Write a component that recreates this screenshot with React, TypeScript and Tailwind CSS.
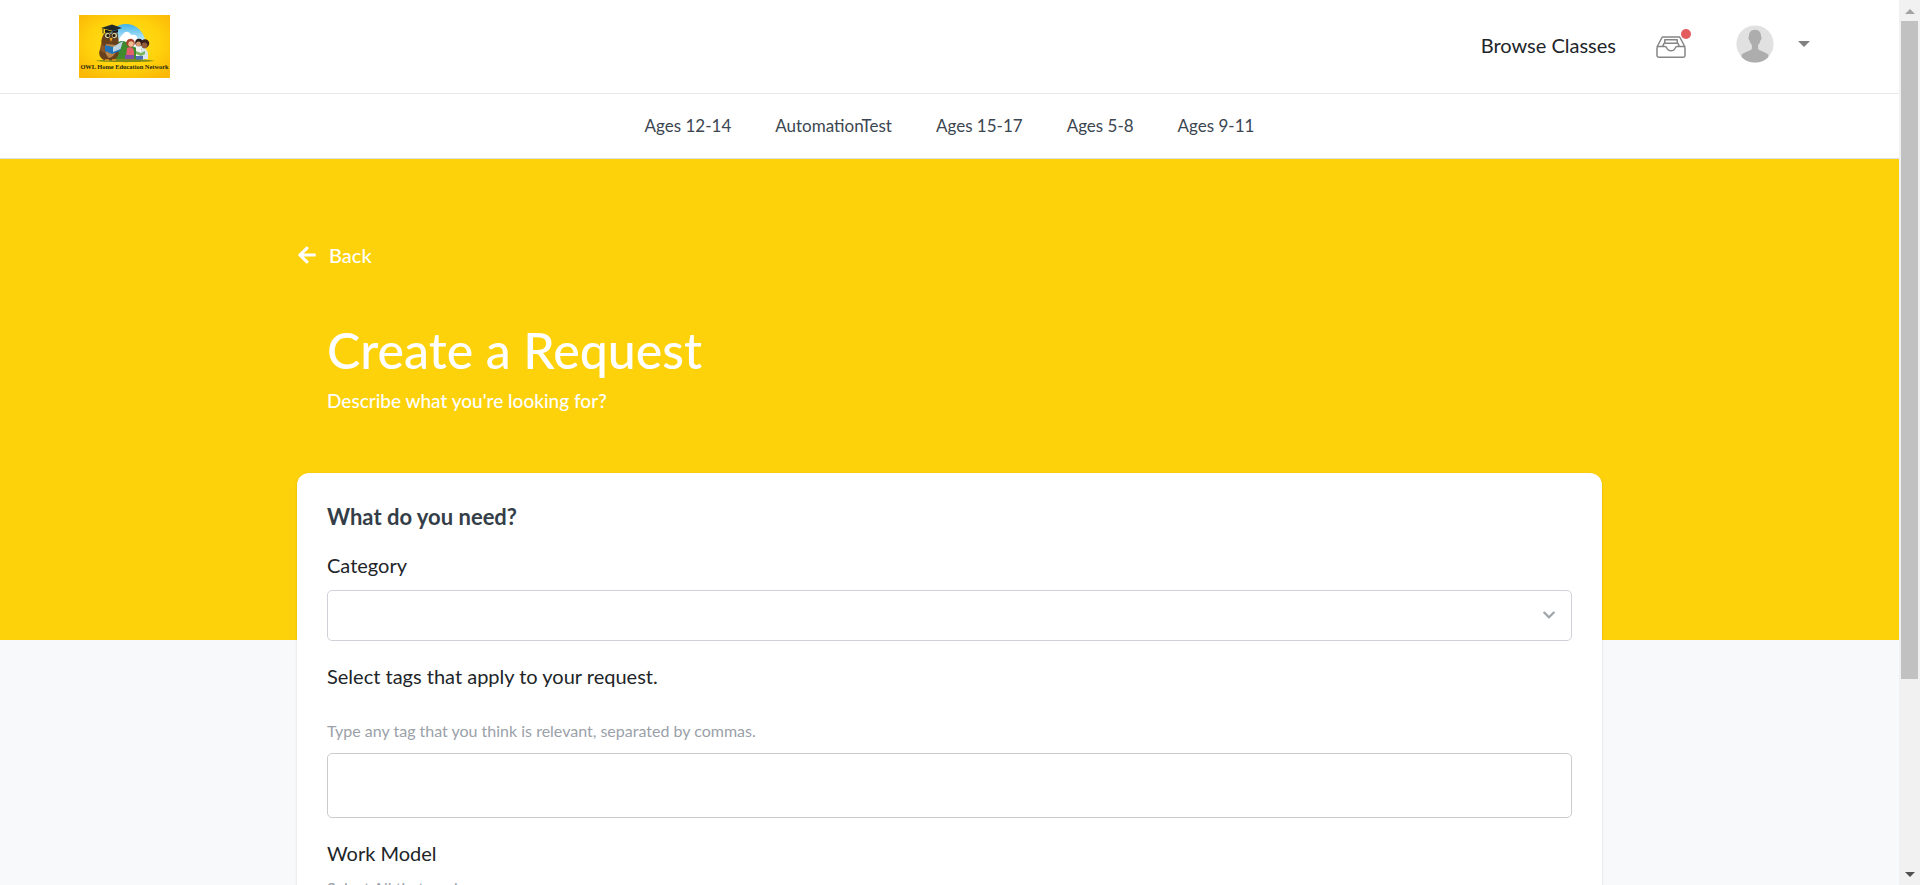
import { FaArrowLeft, FaChevronDown } from "react-icons/fa";

const categories = ["Ages 12-14", "AutomationTest", "Ages 15-17", "Ages 5-8", "Ages 9-11"];

function Logo() {
  return (
    <svg viewBox="0 0 91 63" className="h-[63px] w-[91px]" role="img" aria-label="OWL Home Education Network">
      <defs>
        <radialGradient id="logo-bg" cx="50%" cy="45%" r="65%">
          <stop offset="0" stopColor="#ffe21a" />
          <stop offset="0.6" stopColor="#ffd20c" />
          <stop offset="1" stopColor="#fbb907" />
        </radialGradient>
        <linearGradient id="logo-sky" x1="0" y1="0" x2="0" y2="1">
          <stop offset="0" stopColor="#3fb4ea" />
          <stop offset="0.5" stopColor="#cfeefb" />
          <stop offset="1" stopColor="#e9f7ee" />
        </linearGradient>
      </defs>
      <rect width="91" height="63" fill="url(#logo-bg)" />
      <path d="M28 30C29 2 65 2 67 30l-2 15H28z" fill="url(#logo-sky)" />
      <path d="M44 19c3-4 7-2 8 1 4-1 7 1 6 4 4 0 6 3 7 7H41c-3-4-1-8 3-12z" fill="#fff" />
      <path d="M38 28c5-4 10-1 13 2s8 2 12 4l-1 11H34z" fill="#3f8a2c" />
      <path d="M16 46c16-3 44-3 60 0-14 1.500-44 1.500-60 0z" fill="#7d8b18" />
      <path d="M25 19c-3 4-3 9-2 12-4 5-4 11 2 14h9c6-2 7-9 5-14 1-4 1-8-1-12z" fill="#69401c" />
      <path d="M27 29c-2 5-1 11 3 14 5-1 8-6 7-13z" fill="#b98549" />
      <path d="M22 29l8 5-5 4-4-3zM39 28l5 0-4 6z" fill="#8a5628" />
      <circle cx="28.500" cy="20.500" r="3.200" fill="#d9cf9c" stroke="#37230f" strokeWidth="0.900" />
      <circle cx="35.500" cy="20.500" r="3.200" fill="#d9cf9c" stroke="#37230f" strokeWidth="0.900" />
      <circle cx="29" cy="20.500" r="1.600" fill="#20170c" />
      <circle cx="35" cy="20.500" r="1.600" fill="#20170c" />
      <path d="M30.500 23h3L32 27z" fill="#efa51c" />
      <path d="M22 13l11-3.500L43 13l-9 3z" fill="#23282a" />
      <path d="M26 14.500v3h13v-3l-6 2z" fill="#15191b" />
      <path d="M24 13.500v5" stroke="#23282a" strokeWidth="0.900" />
      <path d="M26 30l8 2 10-6-3 10-8 3-7-3z" fill="#2174b8" />
      <path d="M34 32l10-6-2.500 8-7.500 3z" fill="#bed5df" />
      <path d="M26 45h4M33 45h4" stroke="#e89b16" strokeWidth="1.500" />
      <circle cx="51.500" cy="28" r="4.300" fill="#a9432d" />
      <circle cx="52" cy="29" r="2.700" fill="#f3bd92" />
      <path d="M48 33c4-2 7 0 7 4v5h-8z" fill="#e4626c" />
      <path d="M46 40h9v4h-9z" fill="#7e4fa3" />
      <circle cx="60" cy="27.500" r="3.800" fill="#2b1a14" />
      <circle cx="59.500" cy="29" r="2.500" fill="#d79a70" />
      <path d="M57 32c4-1 6 1 6 5v5h-6z" fill="#f4f2ee" />
      <circle cx="66" cy="28.500" r="4.200" fill="#38201a" />
      <circle cx="65.500" cy="30.500" r="2.900" fill="#945b38" />
      <path d="M62 35c4-2 7 0 7 4v5h-7z" fill="#d9e6ee" />
      <path d="M57 41h7v3.500h-7z" fill="#4f6fb4" />
      <path d="M57 36l5 2 4-2v3l-4 2-5-2z" fill="#79b559" />
      <text x="45.500" y="54" textAnchor="middle" fontSize="6.400" fontWeight="700" fontFamily="'Liberation Serif', serif" fill="#27290f">
        OWL Home Education Network
      </text>
    </svg>
  );
}

function InboxIcon() {
  return (
    <svg viewBox="0 0 30 22" className="h-[22px] w-[30px]" fill="none" stroke="#858585" strokeWidth="1.500" strokeLinejoin="round" aria-hidden="true">
      <path d="M1 11 6.300 1h17.400L29 11" />
      <path d="M2.500 10.500h6.300c1.300 0 1.700.7 2.100 1.700.8 1.700 2.200 2.600 4.100 2.600s3.300-.9 4.100-2.600c.4-1 .8-1.700 2.100-1.700h6.300A1.700 1.700 0 0 1 29 12.200v7.300a1.700 1.700 0 0 1-1.700 1.700H2.700A1.700 1.700 0 0 1 1 19.500v-7.300a1.700 1.700 0 0 1 1.500-1.700z" />
      <path d="M6.800 10.200 8 7.300h14l1.200 2.900M8.800 7V3.800h12.400V7" />
    </svg>
  );
}

function Avatar() {
  return (
    <svg viewBox="0 0 38 38" className="size-[38px]" aria-hidden="true">
      <defs>
        <clipPath id="avatar-clip">
          <circle cx="19" cy="19" r="18.600" />
        </clipPath>
      </defs>
      <circle cx="19" cy="19" r="18.600" fill="#e1e1e1" />
      <path
        clipPath="url(#avatar-clip)"
        fill="#adadad"
        d="M19 4.800c-4 0-6.300 2.800-6.100 7-.9.300-.7 2.700.7 3.700.4 2 1.200 3.400 2.300 4.500v3.800c-.8 2.200-8 3-10.300 6.200V38h26.800v-8c-2.300-3.200-9.500-4-10.300-6.200V20c1.100-1.100 1.900-2.500 2.300-4.500 1.400-1 1.600-3.400.7-3.700.2-4.200-2.100-7-6.100-7z"
      />
    </svg>
  );
}

function Header() {
  return (
    <header className="flex h-[94px] items-center justify-between border-b border-[#e9eaeb] bg-white pr-[89px] pl-[79px]">
      <a href="#home">
        <Logo />
      </a>
      <div className="flex items-center pb-1">
        <a href="#browse" className="text-xl leading-[30px] text-[#212529]">
          Browse Classes
        </a>
        <button type="button" aria-label="Inbox" className="relative mt-1 ml-10">
          <InboxIcon />
          <span className="absolute -top-[7px] -right-[5px] size-[10px] rounded-full bg-[#e35d5e]" />
        </button>
        <button type="button" aria-label="Account menu" className="mb-[2px] ml-[50px] flex items-center gap-6">
          <Avatar />
          <svg viewBox="0 0 12 6" className="h-[6px] w-[12px]" aria-hidden="true">
            <path d="M0 0h12L6 6z" fill="#808080" />
          </svg>
        </button>
      </div>
    </header>
  );
}

function CategoryNav() {
  return (
    <nav className="flex h-[65px] items-center justify-center gap-11 border-b border-[#dcdfe6] bg-white text-[17px] leading-[26px] text-[#3b4650]">
      {categories.map((name) => (
        <a key={name} href="#category">
          {name}
        </a>
      ))}
    </nav>
  );
}

function RequestForm() {
  return (
    <form className="rounded-xl bg-white px-[30px] pt-[26px] pb-[30px] text-xl leading-[30px] text-[#212529] shadow-[0_1px_3px_rgba(0,0,0,0.12)]">
      <h2 className="text-[22px] leading-9 font-bold text-[#343e48]">What do you need?</h2>
      <label htmlFor="category" className="mt-[15px] block">
        Category
      </label>
      <div className="relative mt-[10px]">
        <select id="category" className="block h-[51px] w-full appearance-none rounded-[5px] border border-[#ced2d8] bg-white px-4 text-lg">
          <option value=""></option>
        </select>
        <FaChevronDown className="pointer-events-none absolute top-[18px] right-4 size-[14px] text-[#9ea4aa]" />
      </div>
      <label htmlFor="tags" className="mt-5 block">
        Select tags that apply to your request.
      </label>
      <p id="tags-hint" className="mt-7 text-base leading-6 text-[#9aa1a9]">
        Type any tag that you think is relevant, separated by commas.
      </p>
      <input
        id="tags"
        type="text"
        aria-describedby="tags-hint"
        className="mt-[10px] block h-[65px] w-full rounded-[5px] border border-[#cccccc] bg-white px-4 text-lg"
      />
      <h3 className="mt-5">Work Model</h3>
      <p className="mt-2 text-base leading-6 text-[#9aa1a9]">Select All that apply</p>
    </form>
  );
}

function ScrollRail() {
  return (
    <div aria-hidden="true" className="flex w-[21px] shrink-0 flex-col items-center bg-[#f1f1f1]">
      <div className="flex h-[21px] shrink-0 items-center justify-center pt-[2px]">
        <svg viewBox="0 0 10 5" className="h-[5px] w-[10px]">
          <path d="M0 5h10L5 0z" fill="#a3a3a3" />
        </svg>
      </div>
      <div className="w-full grow px-[2px]">
        <div className="h-[78%] bg-[#c1c1c1]" />
      </div>
      <div className="flex h-[21px] shrink-0 items-center justify-center">
        <svg viewBox="0 0 10 5" className="h-[5px] w-[10px]">
          <path d="M0 0h10L5 5z" fill="#505050" />
        </svg>
      </div>
    </div>
  );
}

export default function App() {
  return (
    <div className="flex h-screen font-['Lato',sans-serif]">
      <div className="min-w-0 grow overflow-y-auto bg-[#f8f9fb] [scrollbar-width:none]">
        <Header />
        <CategoryNav />
        <main>
          <section className="bg-[#fdd20b] pt-[81px] pb-[224px] text-white">
            <div className="mx-auto max-w-[1305px]">
              <a href="#back" className="flex w-fit items-center gap-3 text-xl leading-[30px] font-medium">
                <FaArrowLeft className="size-5" />
                Back
              </a>
              <div className="mt-[50px] px-[30px]">
                <h1 className="text-[50px] leading-[60px] font-medium">Create a Request</h1>
                <p className="mt-[6px] text-[19px] leading-[30px] font-medium">Describe what you're looking for?</p>
              </div>
            </div>
          </section>
          <div className="mx-auto -mt-[167px] max-w-[1305px] pb-20">
            <RequestForm />
          </div>
        </main>
      </div>
      <ScrollRail />
    </div>
  );
}
